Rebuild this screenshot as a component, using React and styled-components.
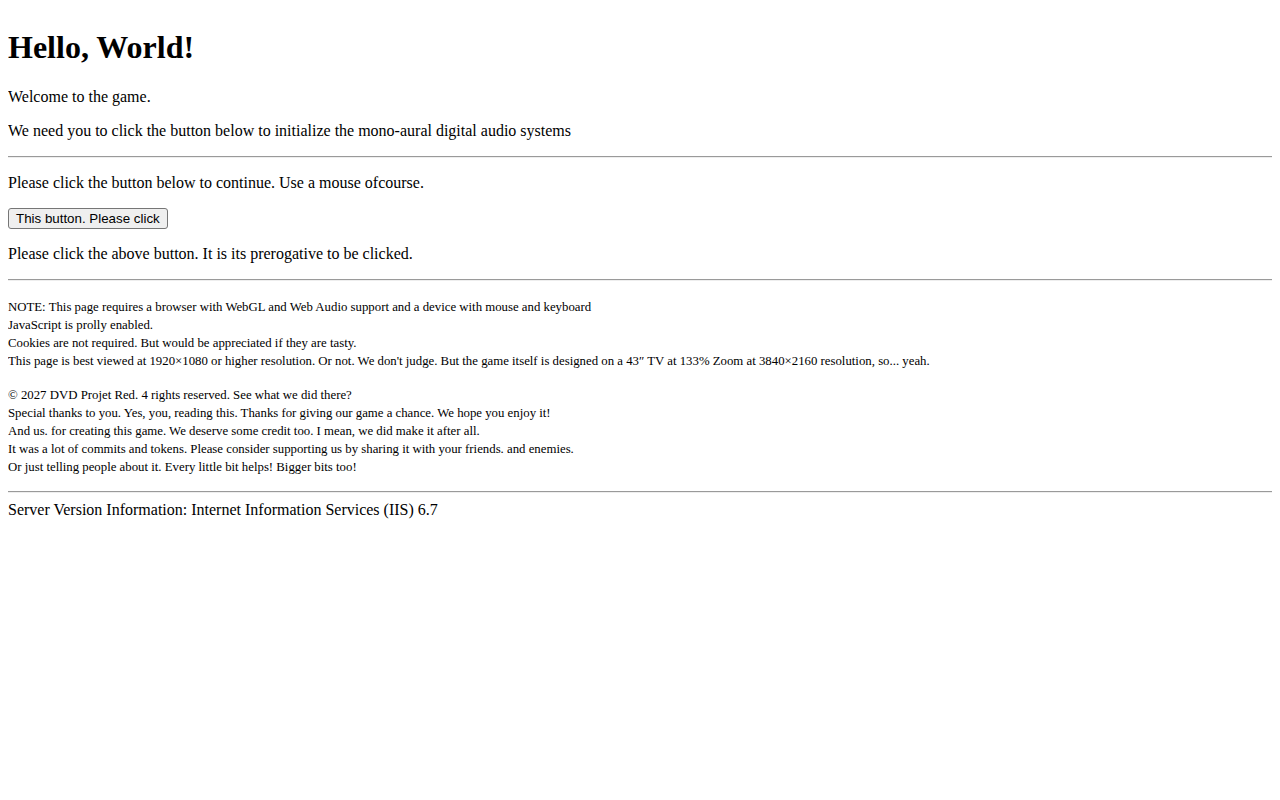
import React from "react";
import styled, { createGlobalStyle } from "styled-components";

const GlobalStyle = createGlobalStyle`
  body {
    margin: 8px;
    font-family: "Liberation Serif", "Times New Roman", serif;
    font-size: 16px;
    color: #000;
    background: #fff;
  }
`;

const Title = styled.h1`
  font-size: 32px;
  font-weight: bold;
  margin: 21.44px 0;
`;

const Para = styled.p`
  margin: 16px 0;
`;

const FinePrint = styled.p`
  margin: 16px 0;
  font-size: 16px;

  small {
    font-size: 12.8px;
  }
`;

const Rule = styled.hr`
  margin: 8px 0;
  height: 0;
  border: none;
  border-top: 1px solid #9a9a9a;
  border-bottom: 1px solid #eeeeee;
`;

const ButtonRow = styled.div`
  margin: 0;
`;

const ClickButton = styled.button`
  box-sizing: border-box;
  height: 21px;
  font-family: "Liberation Sans", Arial, sans-serif;
  font-size: 13.333px;
  line-height: 15px;
  padding: 2px 7px;
  color: #000;
  background: #efefef;
  border: 1px solid #767676;
  border-radius: 3px;
  cursor: pointer;

  &:hover {
    background: #e5e5e5;
  }
`;

const ServerInfo = styled.div`
  margin: 0;
`;

export default function App() {
  const notes = [
    "NOTE: This page requires a browser with WebGL and Web Audio support and a device with mouse and keyboard",
    "JavaScript is prolly enabled.",
    "Cookies are not required. But would be appreciated if they are tasty.",
    "This page is best viewed at 1920\u00d71080 or higher resolution. Or not. We don't judge. But the game itself is designed on a 43\u2033 TV at 133% Zoom at 3840\u00d72160 resolution, so... yeah.",
  ];
  const credits = [
    "\u00a9 2027 DVD Projet Red. 4 rights reserved. See what we did there?",
    "Special thanks to you. Yes, you, reading this. Thanks for giving our game a chance. We hope you enjoy it!",
    "And us. for creating this game. We deserve some credit too. I mean, we did make it after all.",
    "It was a lot of commits and tokens. Please consider supporting us by sharing it with your friends. and enemies.",
    "Or just telling people about it. Every little bit helps! Bigger bits too!",
  ];

  const lines = (arr) =>
    arr.map((t, i) => (
      <React.Fragment key={i}>
        <small>{t}</small>
        {i < arr.length - 1 && <br />}
      </React.Fragment>
    ));

  return (
    <>
      <GlobalStyle />
      <Title>Hello, World!</Title>
      <Para>Welcome to the game.</Para>
      <Para>We need you to click the button below to initialize the mono-aural digital audio systems</Para>
      <Rule />
      <Para>Please click the button below to continue. Use a mouse ofcourse.</Para>
      <ButtonRow>
        <ClickButton type="button">This button. Please click</ClickButton>
      </ButtonRow>
      <Para>Please click the above button. It is its prerogative to be clicked.</Para>
      <Rule />
      <FinePrint>{lines(notes)}</FinePrint>
      <FinePrint>{lines(credits)}</FinePrint>
      <Rule />
      <ServerInfo>Server Version Information: Internet Information Services (IIS) 6.7</ServerInfo>
    </>
  );
}
